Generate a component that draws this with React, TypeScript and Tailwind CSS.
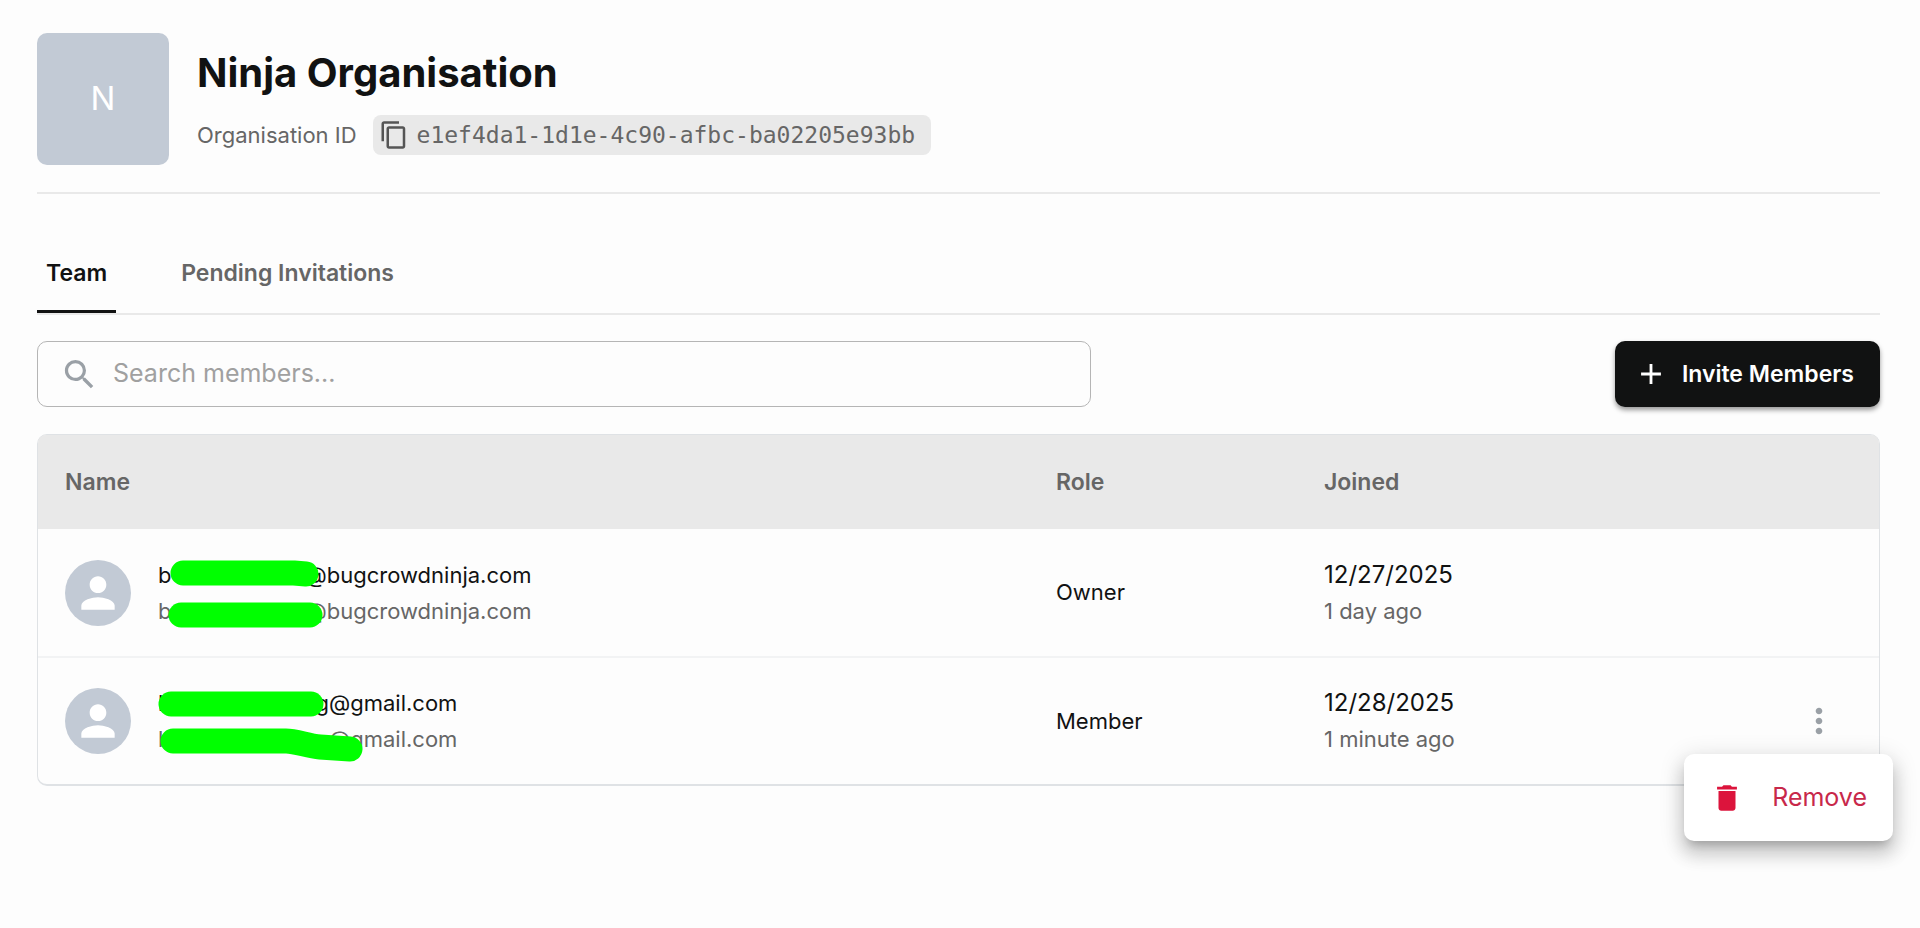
import React from 'react';
import { MdAdd, MdContentCopy, MdDelete, MdMoreVert, MdPerson, MdSearch } from 'react-icons/md';

type Member = {
  id: number;
  prefix: string;
  hiddenClass: string;
  domain: string;
  strokes: string[];
  role: string;
  date: string;
  ago: string;
  menuOpen?: boolean;
};

const members: Member[] = [
  {
    id: 1,
    prefix: 'b',
    hiddenClass: 'w-[134px]',
    domain: '@bugcrowdninja.com',
    strokes: ['M25 16 H136 L148 17', 'M23 58 H152'],
    role: 'Owner',
    date: '12/27/2025',
    ago: '1 day ago',
  },
  {
    id: 2,
    prefix: 'b',
    hiddenClass: 'w-[144px]',
    domain: 'g@gmail.com',
    strokes: ['M13 19 H153', 'M15 56 H128 C138 56 150 61 162 62 L192 64'],
    role: 'Member',
    date: '12/28/2025',
    ago: '1 minute ago',
    menuOpen: true,
  },
];

const Redaction: React.FC<{ strokes: string[] }> = ({ strokes }) => (
  <svg className="absolute top-0 left-0 overflow-visible" width="210" height="72" aria-hidden="true">
    {strokes.map((d) => (
      <path key={d} d={d} fill="none" stroke="#00ff00" strokeWidth="25" strokeLinecap="round" strokeLinejoin="round" />
    ))}
  </svg>
);

const OrganisationHeader: React.FC = () => (
  <header className="flex items-center gap-7 border-b-2 border-[#e9e9e9] pb-[27px]">
    <div className="flex size-[132px] shrink-0 items-center justify-center rounded-[10px] bg-[#c2cad5] text-[33px] text-white">
      N
    </div>
    <div className="pt-1.5">
      <h1 className="text-[40px] leading-12 font-bold text-[#111212]">Ninja Organisation</h1>
      <div className="mt-[18px] flex items-center gap-4">
        <span className="text-[22px] text-[#666]">Organisation ID</span>
        <button
          type="button"
          className="flex h-10 items-center gap-2 rounded-lg bg-[#e9e9e9] pr-4 pl-1.5 font-['DejaVu_Sans_Mono',monospace] text-[23px] text-[#666]"
        >
          <MdContentCopy className="size-[30px] text-[#555]" />
          e1ef4da1-1d1e-4c90-afbc-ba02205e93bb
        </button>
      </div>
    </div>
  </header>
);

const Tabs: React.FC = () => (
  <div role="tablist" className="mt-8 flex h-[89px] gap-14 border-b-2 border-[#e9e9e9] text-[23px] font-semibold">
    <button type="button" role="tab" aria-selected="true" className="border-b-3 border-[#111212] px-[9px] pt-2.5 text-[#111212]">
      Team
    </button>
    <button type="button" role="tab" aria-selected="false" className="border-b-3 border-transparent px-[9px] pt-2.5 text-[#666]">
      Pending Invitations
    </button>
  </div>
);

const Toolbar: React.FC = () => (
  <div className="mt-[26px] flex items-center justify-between">
    <label className="flex h-[66px] w-[57.2%] items-center gap-3.5 rounded-[10px] border border-[#b5b5b5] px-[22px]">
      <MdSearch className="size-[39px] shrink-0 text-[#9aa0a6]" />
      <input
        type="text"
        aria-label="Search members"
        placeholder="Search members..."
        className="w-full bg-transparent text-[25px] outline-none placeholder:text-[#a0a0a0]"
      />
    </label>
    <button
      type="button"
      className="flex h-[66px] items-center gap-3.5 rounded-[10px] bg-[#111212] pr-[26px] pl-[19px] text-[23px] font-semibold text-white shadow-[0_3px_5px_rgba(0,0,0,0.4)]"
    >
      <MdAdd className="size-[34px]" />
      Invite Members
    </button>
  </div>
);

const MemberRow: React.FC<{ member: Member }> = ({ member }) => (
  <tr className="h-32 border-b-2 border-[#f2f3f4] last:h-[127px] last:border-b-0">
    <td className="px-[27px]">
      <div className="flex items-center gap-[27px]">
        <div className="flex size-[66px] shrink-0 items-center justify-center rounded-full bg-[#c2cad5] text-white">
          <MdPerson className="size-[50px]" />
        </div>
        <div className="relative leading-9 whitespace-nowrap">
          <div className="text-[#111212]">
            {member.prefix}
            <span className={`inline-block ${member.hiddenClass}`} />
            {member.domain}
          </div>
          <div className="text-[#666]">
            {member.prefix}
            <span className={`inline-block ${member.hiddenClass}`} />
            {member.domain}
          </div>
          <Redaction strokes={member.strokes} />
        </div>
      </div>
    </td>
    <td className="px-[27px] text-[#111212]">{member.role}</td>
    <td className="px-[27px] leading-9">
      <div className="text-[24px] leading-9 text-[#111212]">{member.date}</div>
      <div className="text-[#666]">{member.ago}</div>
    </td>
    <td className="pr-10">
      {member.menuOpen && (
        <div className="relative ml-auto size-10">
          <button type="button" aria-label="Member actions" className="block text-[#9aa0a6]">
            <MdMoreVert className="size-10" />
          </button>
          <div
            role="menu"
            className="absolute top-[53px] -right-[54px] rounded-[10px] bg-white py-3.5 shadow-[0_8px_8px_-5px_rgba(0,0,0,0.2),0_13px_17px_2px_rgba(0,0,0,0.14),0_5px_23px_3px_rgba(0,0,0,0.12)]"
          >
            <button
              type="button"
              role="menuitem"
              className="flex h-[59px] items-center gap-7 px-[26px] text-[25px] text-[#c8284a]"
            >
              <MdDelete className="size-[34px] text-[#dc143c]" />
              Remove
            </button>
          </div>
        </div>
      )}
    </td>
  </tr>
);

const MembersTable: React.FC = () => (
  <div className="mt-[27px] rounded-[10px] border border-b-2 border-[#dfe2e5]">
    <table className="w-full table-fixed text-left text-[22px]">
      <colgroup>
        <col />
        <col className="w-[268px]" />
        <col className="w-[440px]" />
        <col className="w-[142px]" />
      </colgroup>
      <thead>
        <tr className="h-[94px] text-[23px] text-[#666]">
          <th className="rounded-tl-lg bg-[#e9e9e9] px-[27px] font-semibold">Name</th>
          <th className="bg-[#e9e9e9] px-[27px] font-semibold">Role</th>
          <th className="bg-[#e9e9e9] px-[27px] font-semibold">Joined</th>
          <th className="rounded-tr-lg bg-[#e9e9e9]" />
        </tr>
      </thead>
      <tbody>
        {members.map((member) => (
          <MemberRow key={member.id} member={member} />
        ))}
      </tbody>
    </table>
  </div>
);

const App: React.FC = () => {
  return (
    <main className="min-h-screen bg-[#fdfdfd] pt-[33px] pr-10 pb-8 pl-[37px] font-['Inter',sans-serif]">
      <OrganisationHeader />
      <Tabs />
      <Toolbar />
      <MembersTable />
    </main>
  );
};

export default App;
